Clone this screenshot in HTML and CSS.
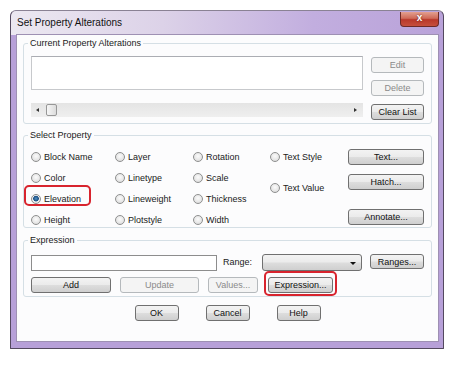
FILE: index.html
```html
<!DOCTYPE html>
<html lang="en">
<head>
    <meta charset="UTF-8">
    <title>Set Property Alterations</title>
    <link rel="stylesheet" href="styles.css">
</head>
<body>
    <div class="window">
        <div class="titlebar">
            <span class="title">Set Property Alterations</span>
            <span class="close">x</span>
        </div>
        <div class="client">
            <fieldset class="group current">
                <legend>Current Property Alterations</legend>
                <div class="current-body">
                    <div class="list-col">
                        <div class="listbox"></div>
                        <div class="hscroll">
                            <span class="arrow left"></span>
                            <span class="thumb"></span>
                            <span class="arrow right"></span>
                        </div>
                    </div>
                    <div class="btn-col">
                        <button class="btn" disabled>Edit</button>
                        <button class="btn" disabled>Delete</button>
                        <button class="btn clear">Clear List</button>
                    </div>
                </div>
            </fieldset>

            <fieldset class="group props">
                <legend>Select Property</legend>
                <div class="props-body">
                    <div class="radio-grid">
                        <label class="opt"><span class="radio"></span>Block Name</label>
                        <label class="opt"><span class="radio"></span>Layer</label>
                        <label class="opt"><span class="radio"></span>Rotation</label>
                        <label class="opt"><span class="radio"></span>Text Style</label>

                        <label class="opt"><span class="radio"></span>Color</label>
                        <label class="opt"><span class="radio"></span>Linetype</label>
                        <label class="opt"><span class="radio"></span>Scale</label>
                        <label class="opt text-value"><span class="radio"></span>Text Value</label>

                        <label class="opt marked"><span class="radio on"></span>Elevation</label>
                        <label class="opt"><span class="radio"></span>Lineweight</label>
                        <label class="opt"><span class="radio"></span>Thickness</label>

                        <label class="opt"><span class="radio"></span>Height</label>
                        <label class="opt"><span class="radio"></span>Plotstyle</label>
                        <label class="opt"><span class="radio"></span>Width</label>
                    </div>
                    <div class="side-col">
                        <button class="btn b-text">Text...</button>
                        <button class="btn b-hatch">Hatch...</button>
                        <button class="btn b-annotate">Annotate...</button>
                    </div>
                </div>
            </fieldset>

            <fieldset class="group expr">
                <legend>Expression</legend>
                <div class="expr-row">
                    <input class="field" type="text">
                    <span class="range-label">Range:</span>
                    <div class="combo"><span class="caret"></span></div>
                    <button class="btn b-ranges">Ranges...</button>
                </div>
                <div class="expr-row second">
                    <button class="btn b-add">Add</button>
                    <button class="btn b-update" disabled>Update</button>
                    <button class="btn b-values" disabled>Values...</button>
                    <span class="marked-btn"><button class="btn b-expr">Expression...</button></span>
                </div>
            </fieldset>

            <div class="footer">
                <button class="btn b-foot">OK</button>
                <button class="btn b-foot">Cancel</button>
                <button class="btn b-foot">Help</button>
            </div>
        </div>
    </div>
</body>
</html>
```

FILE: styles.css
```css
body {
    margin: 0;
    background: #fff;
    font-family: "Liberation Sans", Arial, sans-serif;
    font-size: 9px;
    color: #1a1a1a;
}

.window {
    box-sizing: border-box;
    width: 434px;
    height: 339px;
    margin: 10px 0 0 10px;
    border: 1px solid #54495f;
    border-top-color: #8a8294;
    border-radius: 6px 6px 1px 1px;
    padding: 0 4px 5px 5px;
    background:
        linear-gradient(to right, #ece8f1 0%, #dcd2e8 35%, #c2aedf 70%, #b9a2d9 100%) top / 100% 24px no-repeat,
        #b7a0d8;
    display: flex;
    flex-direction: column;
}

.titlebar {
    height: 23px;
    display: flex;
    align-items: center;
    justify-content: space-between;
}

.title {
    padding-left: 1px;
    margin-top: -1px;
    font-size: 10px;
    color: #111;
}

.close {
    align-self: flex-start;
    margin-top: 1px;
    box-sizing: border-box;
    width: 39px;
    height: 15px;
    border: 1px solid #6d2a26;
    border-top: none;
    border-radius: 0 0 4px 4px;
    background: linear-gradient(#e3a08f 0%, #cf6a58 45%, #b9382a 55%, #c64f3d 100%);
    color: #fff;
    font-weight: bold;
    font-size: 10px;
    line-height: 12px;
    text-align: center;
    text-shadow: 0 0 2px #5a1410;
}

.client {
    box-sizing: border-box;
    height: 308px;
    border: 1px solid #9e90b3;
    background: #fcfcfd;
    padding: 3px 6px 0 6px;
}

.group {
    margin: 0;
    min-width: 0;
    border: 1px solid #d5dfe5;
    border-radius: 3px;
    padding: 0 7px 3px 7px;
}

.group legend {
    padding: 0 2px;
    margin-left: -3px;
    line-height: 11px;
}

/* buttons */
.btn {
    box-sizing: border-box;
    height: 16px;
    padding: 0;
    border: 1px solid #707070;
    border-radius: 3px;
    background: linear-gradient(#f3f3f3 0%, #ebebeb 48%, #dddddd 52%, #cfcfcf 100%);
    font: inherit;
    color: #111;
    line-height: 14px;
    text-align: center;
}

.btn:disabled {
    border-color: #b5b9bc;
    background: #f4f4f4;
    color: #8a8a8a;
}

/* current alterations */
.current-body {
    margin-top: 7px;
    display: flex;
    gap: 8px;
}

.list-col {
    width: 332px;
}

.listbox {
    box-sizing: border-box;
    height: 34px;
    border: 1px solid #c7c9cc;
    border-top-color: #abadb3;
    background: #fff;
}

.hscroll {
    margin-top: 13px;
    height: 14px;
    background: linear-gradient(#e4e4e4, #efefef);
    display: flex;
    align-items: center;
    padding: 0 5px;
}

.arrow {
    width: 0;
    height: 0;
    border-top: 2.5px solid transparent;
    border-bottom: 2.5px solid transparent;
}

.arrow.left {
    border-right: 3px solid #333;
}

.arrow.right {
    margin-left: auto;
    margin-right: 1px;
    border-left: 3px solid #333;
}

.thumb {
    box-sizing: border-box;
    width: 11px;
    height: 12px;
    margin-left: 7px;
    border: 1px solid #979797;
    border-radius: 2px;
    background: linear-gradient(to right, #f6f6f6, #dcdcdc);
}

.btn-col {
    width: 53px;
    padding-top: 1px;
    display: flex;
    flex-direction: column;
}

.btn-col .btn:nth-child(2) {
    margin-top: 7px;
}

.btn-col .clear {
    margin-top: 8px;
}

/* select property */
.props {
    margin-top: 6px;
    padding-bottom: 0;
}

.props-body {
    margin-top: 5px;
    display: flex;
}

.radio-grid {
    display: grid;
    grid-template-columns: 84px 78px 77px 78px;
    grid-template-rows: 21px 21px 21px 18px;
    grid-auto-flow: row;
}

.opt {
    display: inline-flex;
    align-items: center;
    gap: 3px;
    justify-self: start;
    height: 21px;
    position: relative;
}

.radio-grid .opt:nth-child(4) {
    grid-column: 4;
    grid-row: 1;
}

.radio-grid .text-value {
    grid-column: 4;
    grid-row: 2 / span 2;
    align-self: center;
}

.radio-grid .opt:nth-child(9),
.radio-grid .opt:nth-child(12) {
    grid-column: 1;
}

.radio {
    box-sizing: border-box;
    width: 10px;
    height: 10px;
    flex: none;
    border: 1px solid #8e8f8f;
    border-radius: 50%;
    background: radial-gradient(circle at 50% 40%, #fbfbfb 0%, #e6e6e6 60%, #d2d2d2 100%);
}

.radio.on {
    background: radial-gradient(circle at 50% 45%, #4d8fc4 0, #1c4f82 2.5px, #f3f3f3 3.2px, #d8d8d8 100%);
}

.marked::after {
    content: "";
    position: absolute;
    top: -3px;
    bottom: 3px;
    left: -7px;
    right: -10px;
    border: 2px solid #d8242e;
    border-radius: 5px;
}

.side-col {
    width: 76px;
    display: flex;
    flex-direction: column;
}

.b-text {
    margin-top: 3px;
}

.b-hatch {
    margin-top: 9px;
}

.b-annotate {
    margin-top: 19px;
}

/* expression */
.expr {
    margin-top: 7px;
}

.expr-row {
    margin-top: 8px;
    display: flex;
    align-items: flex-start;
}

.expr-row.second {
    margin-top: 6px;
    gap: 9px;
}

.field {
    box-sizing: border-box;
    width: 186px;
    height: 16px;
    margin: 1px 0 0 0;
    border: 1px solid #8d8d8d;
    background: #fff;
    padding: 0;
}

.range-label {
    margin-left: 6px;
    width: 39px;
    line-height: 17px;
}

.combo {
    box-sizing: border-box;
    width: 100px;
    height: 17px;
    border: 1px solid #707070;
    border-radius: 3px;
    background: linear-gradient(#f3f3f3 0%, #ebebeb 48%, #dddddd 52%, #cfcfcf 100%);
    display: flex;
    align-items: center;
    justify-content: flex-end;
    padding-right: 5px;
}

.caret {
    width: 0;
    height: 0;
    margin-top: 2px;
    border-left: 3px solid transparent;
    border-right: 3px solid transparent;
    border-top: 3px solid #111;
}

.b-ranges {
    margin-left: 8px;
    width: 54px;
    height: 15px;
}

.b-add {
    width: 80px;
}

.b-update {
    width: 79px;
}

.b-values {
    width: 50px;
}

.marked-btn {
    position: relative;
    display: flex;
    margin-left: 1px;
}

.b-expr {
    width: 65px;
}

.marked-btn::after {
    content: "";
    position: absolute;
    top: -6px;
    bottom: -3px;
    left: -4px;
    right: -4px;
    border: 2px solid #d8242e;
    border-radius: 5px;
}

.footer {
    margin-top: 8px;
    display: flex;
    justify-content: center;
    gap: 27px;
}

.b-foot {
    width: 44px;
}
```
